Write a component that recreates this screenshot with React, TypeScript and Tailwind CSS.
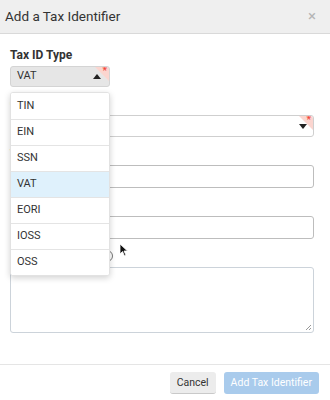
import { useState } from "react";

const OPTIONS = ["TIN", "EIN", "SSN", "VAT", "EORI", "IOSS", "OSS"];

function RequiredCorner() {
  return (
    <span className="pointer-events-none absolute right-0 top-0 h-[14px] w-[14px] overflow-hidden rounded-tr-[3px]">
      <span className="absolute right-0 top-0 h-0 w-0 border-l-[14px] border-t-[14px] border-l-transparent border-t-[#fbd5cf]" />
      <span className="absolute right-[2px] top-[0px] text-[10px] font-bold leading-[8px] text-[#f2473a]">*</span>
    </span>
  );
}

function Label({ children }: { children: React.ReactNode }) {
  return <div className="mb-1 h-[14px] text-[12px] font-bold leading-[14px] text-[#333]">{children}</div>;
}

export default function App() {
  const [selected] = useState("VAT");

  return (
    <div className="flex h-[400px] w-[330px] flex-col bg-white font-['Roboto','Liberation_Sans',sans-serif] text-[#333]">
      <div className="flex h-[34px] items-center justify-between border-b border-[#d9d9d9] bg-[#efefef] pl-[5px] pr-[14px]">
        <span className="text-[13.5px] text-[#333]">Add a Tax Identifier</span>
        <span className="text-[15px] leading-none text-[#b5b5b5]">×</span>
      </div>

      <div className="relative flex-1 pl-[10px] pr-[16px] pt-[14px]">
        <Label>Tax ID Type</Label>
        <div className="relative">
          <div className="relative flex h-[21px] w-[100px] items-center justify-between rounded-[3px] border border-[#d4d4d4] bg-[#e6e6e6] pl-[6px] pr-[8px] text-[11px]">
            <span>{selected}</span>
            <span className="h-0 w-0 border-x-[4px] border-b-[5px] border-x-transparent border-b-[#222]" />
            <RequiredCorner />
          </div>

          <div className="absolute left-0 top-[26px] z-10 w-[100px] overflow-hidden rounded-[3px] border border-[#e2e2e2] bg-white shadow-[0_2px_6px_rgba(0,0,0,0.18)]">
            {OPTIONS.map((o, i) => (
              <div
                key={o}
                className={
                  "flex h-[26px] items-center px-[6px] text-[11px] text-[#333] " +
                  (i > 0 ? "border-t border-[#e4e4e4] " : "") +
                  (o === selected ? "bg-[#dff1fc]" : "bg-white")
                }
              >
                {o}
              </div>
            ))}
          </div>
        </div>

        <div className="mt-[10px]">
          <Label>Country</Label>
          <div className="relative flex h-[22px] items-center justify-end rounded-[3px] border border-[#cfcfcf] bg-white pr-[6px]">
            <span className="h-0 w-0 border-x-[4px] border-t-[5px] border-x-transparent border-t-[#222]" />
            <RequiredCorner />
          </div>
        </div>

        <div className="mt-[10px]">
          <Label>Tax ID</Label>
          <div className="h-[23px] rounded-[3px] border border-[#bdbdbd] bg-white" />
        </div>

        <div className="mt-[10px]">
          <Label>Legal Name</Label>
          <div className="h-[23px] rounded-[3px] border border-[#bdbdbd] bg-white" />
        </div>

        <div className="mt-[10px]">
          <div className="mb-1 flex h-[14px] items-center text-[12px] font-bold leading-[14px] text-[#333]">
            <span>Notes</span>
            <span className="ml-[59px] inline-block h-[12px] w-[12px] rounded-full border border-[#777]" />
          </div>
          <div className="relative h-[66px] rounded-[3px] border border-[#ccd3da] bg-white">
            <svg className="absolute bottom-[1px] right-[1px]" width="7" height="7" viewBox="0 0 7 7">
              <path d="M6 1 L1 6 M6 4 L4 6" stroke="#999" strokeWidth="1" />
            </svg>
          </div>
        </div>

        <svg className="absolute left-[119px] top-[209px] z-20" width="10" height="14" viewBox="0 0 10 14">
          <path d="M1 1 L1 11 L3.5 8.5 L5.5 13 L7 12.3 L5 8 L8.5 8 Z" fill="#111" stroke="#fff" strokeWidth="0.8" />
        </svg>
      </div>

      <div className="flex h-[36px] items-start justify-end gap-[8px] border-t border-[#e5e5e5] pr-[11px] pt-[7px]">
        <button className="h-[22px] rounded-[3px] border-b border-[#c9c9c9] bg-[#ececec] px-[7px] text-[10.5px] text-[#333]">
          Cancel
        </button>
        <button className="h-[22px] rounded-[3px] bg-[#a9cbec] px-[7px] text-[10.5px] text-white">
          Add Tax Identifier
        </button>
      </div>
    </div>
  );
}
